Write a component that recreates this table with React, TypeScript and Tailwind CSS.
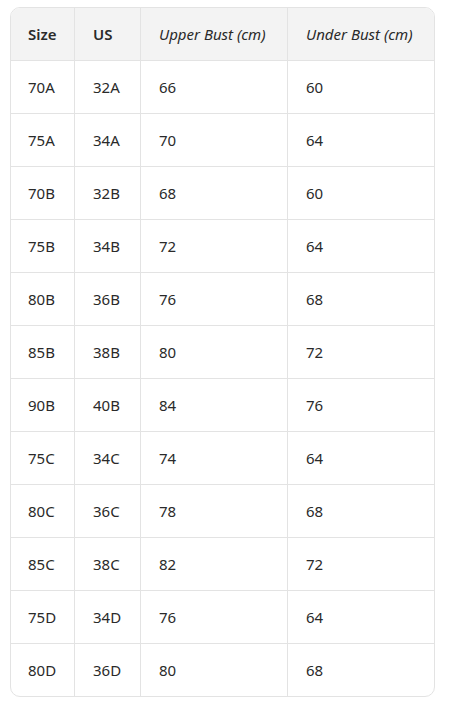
import React from "react";

const rows: [string, string, string, string][] = [
  ["70A", "32A", "66", "60"],
  ["75A", "34A", "70", "64"],
  ["70B", "32B", "68", "60"],
  ["75B", "34B", "72", "64"],
  ["80B", "36B", "76", "68"],
  ["85B", "38B", "80", "72"],
  ["90B", "40B", "84", "76"],
  ["75C", "34C", "74", "64"],
  ["80C", "36C", "78", "68"],
  ["85C", "38C", "82", "72"],
  ["75D", "34D", "76", "64"],
  ["80D", "36D", "80", "68"],
];

const cols = "grid grid-cols-[63px_66px_147px_147px]";

export default function App() {
  return (
    <div className="min-h-[701px] w-[463px] bg-white pl-[10px] pt-[7px] text-[15px] text-[#2a2a2a]" style={{ fontFamily: '"Noto Sans", "Open Sans", sans-serif' }}>
      <div className="w-[425px] overflow-hidden rounded-[10px] border border-[#e3e3e3]">
        <div className={`${cols} h-[52px] bg-[#f3f3f3]`}>
          <div className="flex items-center pl-[17px] pt-[1px] font-semibold">Size</div>
          <div className="flex items-center border-l border-[#e3e3e3] pl-[18px] pt-[1px] font-semibold">US</div>
          <div className="flex items-center border-l border-[#e3e3e3] pl-[18px] pt-[1px] italic">Upper Bust (cm)</div>
          <div className="flex items-center border-l border-[#e3e3e3] pl-[18px] pt-[1px] italic">Under Bust (cm)</div>
        </div>
        {rows.map((r, i) => (
          <div key={i} className={`${cols} h-[53px] border-t border-[#e3e3e3]`}>
            <div className="flex items-center pl-[17px] pt-[1px]">{r[0]}</div>
            <div className="flex items-center border-l border-[#e3e3e3] pl-[18px] pt-[1px]">{r[1]}</div>
            <div className="flex items-center border-l border-[#e3e3e3] pl-[18px] pt-[1px]">{r[2]}</div>
            <div className="flex items-center border-l border-[#e3e3e3] pl-[18px] pt-[1px]">{r[3]}</div>
          </div>
        ))}
      </div>
    </div>
  );
}
